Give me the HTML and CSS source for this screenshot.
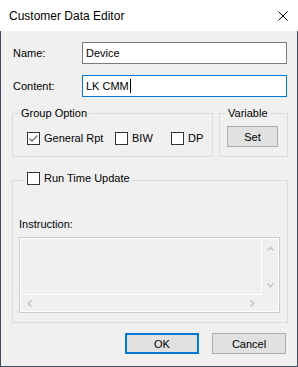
FILE: index.html
```html
<!DOCTYPE html>
<html lang="en">
<head>
  <meta charset="UTF-8" />
  <title>Customer Data Editor</title>
  <link rel="stylesheet" href="styles.css">
</head>
<body>
  <div class="window">
    <div class="titlebar">
      <span class="title">Customer Data Editor</span>
      <svg class="close" width="10" height="10" viewBox="0 0 10 10">
        <path d="M0.5 0.5 L9.5 9.5 M9.5 0.5 L0.5 9.5" stroke="#000" stroke-width="1" fill="none" />
      </svg>
    </div>

    <div class="client">
      <div class="field-row">
        <span class="field-label">Name:</span>
        <div class="edit">Device</div>
      </div>
      <div class="field-row last">
        <span class="field-label">Content:</span>
        <div class="edit focused">LK CMM<span class="caret"></span></div>
      </div>

      <div class="group-row">
        <fieldset class="group group-option">
          <legend>Group Option</legend>
          <div class="options">
            <span class="check-item wide">
              <span class="box">
                <svg width="11" height="11" viewBox="0 0 11 11">
                  <polyline points="1.5,5.5 4,8 9.5,2.5" fill="none" stroke="#6d6d6d" stroke-width="1.3" />
                </svg>
              </span>
              General Rpt
            </span>
            <span class="check-item mid"><span class="box"></span>BIW</span>
            <span class="check-item"><span class="box"></span>DP</span>
          </div>
        </fieldset>
        <fieldset class="group group-variable">
          <legend>Variable</legend>
          <button class="btn set">Set</button>
        </fieldset>
      </div>

      <fieldset class="group group-runtime">
        <legend><span class="check-item"><span class="box"></span>Run Time Update</span></legend>
        <div class="instr-label">Instruction:</div>
        <div class="memo">
          <div class="memo-text"></div>
          <div class="vscroll">
            <svg width="7" height="5" viewBox="0 0 7 5"><polyline points="0.5,4.5 3.5,1.2 6.5,4.5" fill="none" stroke="#c2c2c2" stroke-width="1.4" /></svg>
            <svg width="7" height="5" viewBox="0 0 7 5"><polyline points="0.5,0.5 3.5,3.8 6.5,0.5" fill="none" stroke="#c2c2c2" stroke-width="1.4" /></svg>
          </div>
          <div class="hscroll">
            <svg width="5" height="7" viewBox="0 0 5 7"><polyline points="4.5,0.5 1.2,3.5 4.5,6.5" fill="none" stroke="#c2c2c2" stroke-width="1.4" /></svg>
            <svg width="5" height="7" viewBox="0 0 5 7"><polyline points="0.5,0.5 3.8,3.5 0.5,6.5" fill="none" stroke="#c2c2c2" stroke-width="1.4" /></svg>
          </div>
          <div class="corner"></div>
        </div>
      </fieldset>

      <div class="button-row">
        <button class="btn default">OK</button>
        <button class="btn">Cancel</button>
      </div>
    </div>
  </div>
</body>
</html>
```

FILE: styles.css
```css
body {
  margin: 0;
  background: #f0f0f0;
  font-family: 'Liberation Sans', Arial, sans-serif;
  font-size: 11px;
  color: #000;
}

.window {
  width: 298px;
  height: 367px;
  display: flex;
  flex-direction: column;
}

.titlebar {
  height: 31px;
  flex: none;
  display: flex;
  align-items: center;
  background: #fff;
  padding-left: 9px;
}

.title {
  font-size: 12px;
}

.close {
  margin-left: auto;
  margin-right: 10px;
}

.client {
  flex: 1;
  background: #f0f0f0;
  border: 1px solid #434b5c;
  border-top: none;
  padding: 11px 9px 0 11px;
}

/* edit rows */
.field-row {
  display: flex;
  align-items: center;
  height: 22px;
  margin-bottom: 11px;
}

.field-row.last {
  margin-bottom: 10px;
}

.field-label {
  width: 70px;
  box-sizing: border-box;
  padding-left: 1px;
  line-height: 13px;
}

.edit {
  width: 205px;
  height: 22px;
  box-sizing: border-box;
  border: 1px solid #7a7a7a;
  background: #fff;
  padding: 0 3px;
  line-height: 20px;
  display: flex;
  align-items: center;
}

.edit.focused {
  border-color: #0078d7;
}

.caret {
  display: inline-block;
  width: 1px;
  height: 14px;
  background: #000;
  margin-left: 1px;
}

/* group boxes */
.group {
  margin: 0;
  padding: 0;
  border: 1px solid #dcdcdc;
  min-width: 0;
  box-sizing: border-box;
}

.group legend {
  padding: 0 2px;
  margin-left: 6px;
  line-height: 13px;
}

.group-row {
  display: flex;
  gap: 6px;
}

.group-option {
  width: 201px;
  height: 50px;
}

.group-variable {
  width: 69px;
  height: 50px;
}

.options {
  display: flex;
  padding: 12px 0 0 14px;
}

.check-item {
  display: inline-flex;
  align-items: center;
  gap: 4px;
  line-height: 13px;
}

.check-item.wide {
  width: 88px;
}

.check-item.mid {
  width: 56px;
}

.box {
  width: 13px;
  height: 13px;
  box-sizing: border-box;
  border: 1px solid #333;
  background: #fff;
  display: inline-flex;
  align-items: center;
  justify-content: center;
}

.btn {
  background: #e1e1e1;
  border: 1px solid #adadad;
  font-family: 'Liberation Sans', Arial, sans-serif;
  font-size: 11px;
  color: #000;
  padding: 0;
  height: 21px;
  width: 74px;
  box-sizing: border-box;
}

.btn.set {
  width: 51px;
  margin: 6px 0 0 7px;
}

.btn.default {
  border-color: #0078d7;
  box-shadow: inset 0 0 0 1px #0078d7;
}

/* run time group */
.group-runtime {
  width: 276px;
  height: 151px;
  margin-top: 15px;
  padding: 0 7px 0 6px;
}

.instr-label {
  padding-top: 30px;
  line-height: 13px;
}

.memo {
  margin-top: 6px;
  height: 76px;
  box-sizing: border-box;
  border: 1px solid #cccccc;
  box-shadow: inset 0 0 0 1px #fff;
  display: grid;
  grid-template-columns: 1fr 17px;
  grid-template-rows: 1fr 17px;
}

.memo-text {
  border-right: 1px solid #fff;
  border-bottom: 1px solid #fff;
}

.vscroll {
  display: flex;
  flex-direction: column;
  justify-content: space-between;
  align-items: center;
  padding: 8px 0 7px;
}

.hscroll {
  display: flex;
  justify-content: space-between;
  align-items: center;
  padding: 0 7px 1px;
}

.button-row {
  display: flex;
  justify-content: flex-end;
  gap: 13px;
  margin-top: 10px;
  padding-right: 2px;
}
```
